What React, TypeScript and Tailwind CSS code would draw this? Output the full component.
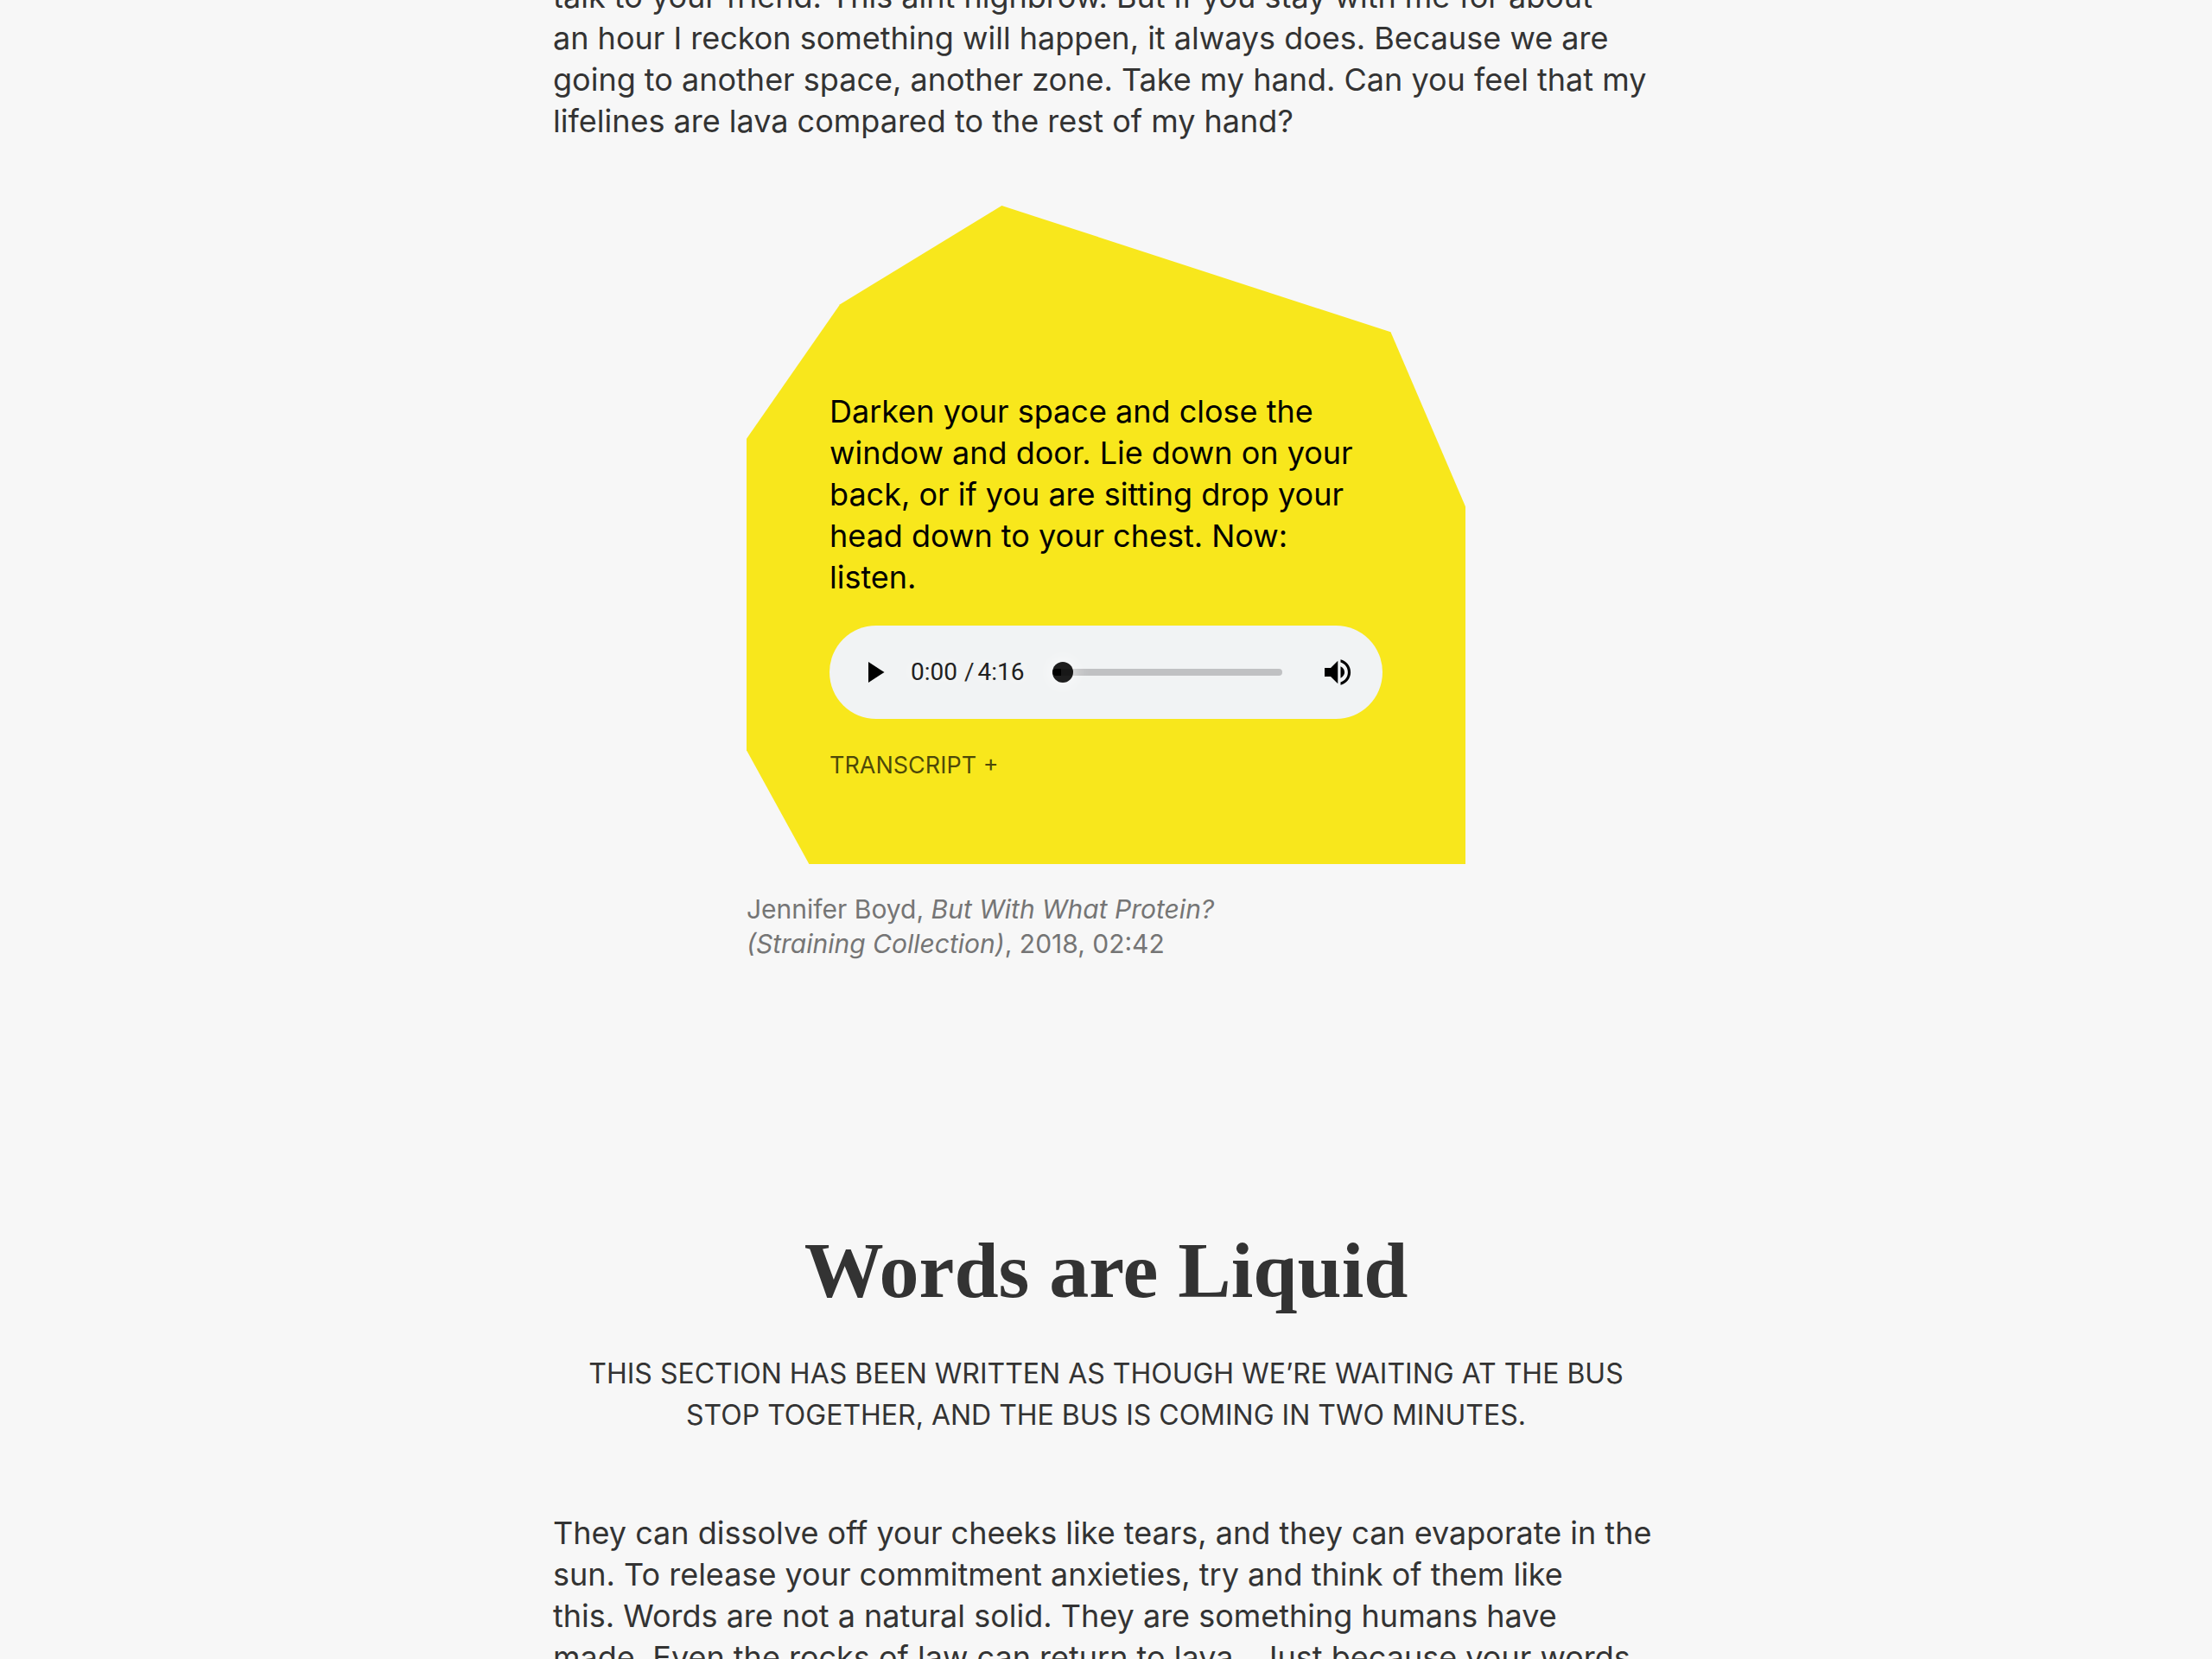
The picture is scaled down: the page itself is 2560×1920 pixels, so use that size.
import React from "react";

const intro = [
    "talk to your friend. This aint highbrow. But if you stay with me for about",
    "an hour I reckon something will happen, it always does. Because we are",
    "going to another space, another zone. Take my hand. Can you feel that my",
    "lifelines are lava compared to the rest of my hand?",
];

const instructions = [
    "Darken your space and close the",
    "window and door. Lie down on your",
    "back, or if you are sitting drop your",
    "head down to your chest. Now:",
    "listen.",
];

const liquid = [
    "They can dissolve off your cheeks like tears, and they can evaporate in the",
    "sun. To release your commitment anxieties, try and think of them like",
    "this. Words are not a natural solid. They are something humans have",
    "made. Even the rocks of law can return to lava.  Just because your words",
];

function Lines({ lines }: { lines: string[] }) {
    return (
        <>
            {lines.map((line) => (
                <span key={line} className="block whitespace-pre">
                    {line}
                </span>
            ))}
        </>
    );
}

function AudioPlayer() {
    return (
        <div className="mt-8 flex h-27 items-center rounded-full bg-[#f1f3f4] px-8">
            <button type="button" aria-label="Play" className="shrink-0">
                <svg className="h-10 w-10" viewBox="0 0 40 40">
                    <path d="M13 8v24l18.5-12z" />
                </svg>
            </button>
            <div className="ml-[22px] flex shrink-0 font-[Roboto,sans-serif] text-[28px] leading-8 text-[#202020] [text-shadow:0_0_20px_#ffffff]">
                <span>0:00</span>
                <span className="ml-2">/</span>
                <span className="ml-1">4:16</span>
            </div>
            <input
                type="range"
                min={0}
                max={256}
                defaultValue={0}
                aria-label="Seek"
                className="ml-8 h-6 min-w-0 flex-1 appearance-none bg-transparent [&::-webkit-slider-runnable-track]:h-2 [&::-webkit-slider-runnable-track]:rounded-full [&::-webkit-slider-runnable-track]:bg-[linear-gradient(90deg,#000000_10px,#c0c1c3_10px)] [&::-webkit-slider-thumb]:-mt-2 [&::-webkit-slider-thumb]:h-6 [&::-webkit-slider-thumb]:w-6 [&::-webkit-slider-thumb]:appearance-none [&::-webkit-slider-thumb]:rounded-full [&::-webkit-slider-thumb]:bg-black/88 [&::-webkit-slider-thumb]:shadow-[0_0_20px_#ffffff]"
            />
            <button type="button" aria-label="Mute" className="ml-11 shrink-0">
                <svg className="h-10 w-10" viewBox="0 0 40 40">
                    <path d="M5 15v10h7l8.3 8.3V6.700L12 15z" />
                    <path d="M23.500 13.300v13.400c2.800-1.400 4.600-3.900 4.600-6.700s-1.800-5.300-4.600-6.700z" />
                    <path d="M23.500 5.300v3.200c4.900 1.500 8.400 6 8.400 11.500s-3.500 10-8.400 11.500v3.200c6.700-1.500 11.600-7.500 11.600-14.700S30.200 6.800 23.500 5.300z" />
                </svg>
            </button>
        </div>
    );
}

function AudioFigure() {
    return (
        <figure className="mx-auto mt-[74px] max-w-[832px]">
            <div className="bg-[#f8e71c] px-24 pt-[214px] pb-[94px] text-black [clip-path:polygon(35.5%_0,89.6%_19.2%,100%_45.7%,100%_100%,8.7%_100%,0_82.7%,0_35.4%,13%_15%)]">
                <p className="text-[36px] leading-12">
                    <Lines lines={instructions} />
                </p>
                <AudioPlayer />
                <button type="button" className="mt-[34px] block text-[27px] leading-10 text-black/70">
                    TRANSCRIPT +
                </button>
            </div>
            <figcaption className="mt-8 text-[30px] leading-10 text-[#757575]">
                Jennifer Boyd, <em>But With What Protein?</em>
                <br />
                <em>(Straining Collection)</em>, 2018, 02:42
            </figcaption>
        </figure>
    );
}

function App() {
    return (
        <div className="h-screen overflow-hidden bg-[#f7f7f7] font-[Inter,sans-serif] text-[#333333]">
            <main className="mx-auto -mt-7 max-w-[1280px]">
                <p className="text-[36px] leading-12">
                    <Lines lines={intro} />
                </p>
                <AudioFigure />
                <section className="mt-[302px]">
                    <h2 className="text-center font-['Liberation_Serif',serif] text-[92px] leading-28 font-bold">
                        Words are Liquid
                    </h2>
                    <p className="mt-10 text-center text-[32px] leading-12 uppercase">
                        <Lines
                            lines={[
                                "This section has been written as though we’re waiting at the bus",
                                "stop together, and the bus is coming in two minutes.",
                            ]}
                        />
                    </p>
                    <p className="mt-22 text-[36px] leading-12">
                        <Lines lines={liquid} />
                    </p>
                </section>
            </main>
        </div>
    );
}

export default App;
